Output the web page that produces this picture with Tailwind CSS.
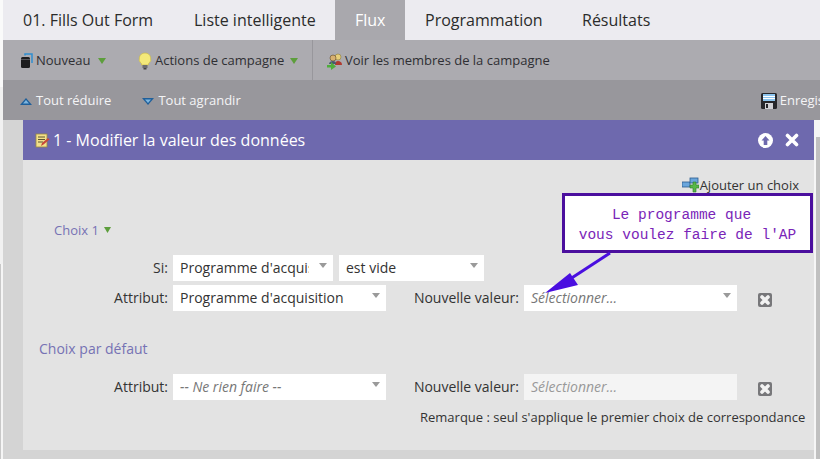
<!DOCTYPE html>
<html lang="fr">
<head>
    <meta charset="UTF-8">
    <title>Flux</title>
    <script src="https://cdn.jsdelivr.net/npm/@tailwindcss/browser@4"></script>
</head>
<body class="w-[820px] h-[459px] overflow-hidden relative flex bg-[#f5f5f5] font-['Open_Sans',sans-serif] text-[13px] text-[#333]">
    <!-- Left edge -->
    <div class="w-[3px] shrink-0 flex flex-col">
        <div class="h-[87px] bg-[#fafafa]"></div>
        <div class="h-[177px] bg-[#f1f1f1]"></div>
        <div class="flex-1 bg-[#f5f5f5] border-l border-[#c8c8c8]"></div>
    </div>

    <div class="flex-1 flex flex-col min-w-0">
        <!-- Tabs -->
        <div class="h-10 shrink-0 flex bg-[#ecebf0] text-base text-[#2b2b2b] whitespace-nowrap">
            <div class="w-[171px] pl-5 flex items-center">01. Fills Out Form</div>
            <div class="w-[161px] pl-5 flex items-center">Liste intelligente</div>
            <div class="w-[70px] pl-5 flex items-center bg-[#a9a8ad] text-white">Flux</div>
            <div class="w-[157px] pl-5 flex items-center">Programmation</div>
            <div class="pl-5 flex items-center">Résultats</div>
        </div>

        <!-- Main toolbar -->
        <div class="h-10 shrink-0 flex items-center bg-[#acabb0] text-[#2f2f33] whitespace-nowrap">
            <div class="flex items-center h-full pt-[2px] pl-[17px] w-[135px]">
                <svg class="w-[13px] h-[16px] mr-[3px]" viewBox="0 0 13 16"><path d="M5 2.500V1h7v9" fill="none" stroke="#2f8fd0" stroke-width="1.500"/><rect x="1" y="4" width="9" height="11" rx="1.500" fill="#1c1c1e"/><rect x="1" y="6" width="9" height="1" fill="#55555a"/></svg>
                <span>Nouveau</span>
                <svg class="w-2 h-[6px] ml-[7px]" viewBox="0 0 8 6"><path d="M0 0h8L4 6z" fill="#5d9e3c"/></svg>
            </div>
            <div class="flex items-center h-full pt-[2px] w-[175px] border-r border-[#98979c]">
                <svg class="w-[14px] h-[18px] mr-[3px]" viewBox="0 0 14 18"><path d="M7 1a6 6 0 0 1 3.500 10.800V13h-7v-1.200A6 6 0 0 1 7 1z" fill="#f4e97a" stroke="#c9b94a" stroke-width=".7"/><rect x="4.500" y="13" width="5" height="3" fill="#6c6c70"/><rect x="5.500" y="16" width="3" height="1.500" fill="#444"/></svg>
                <span>Actions de campagne</span>
                <svg class="w-2 h-[6px] ml-[6px]" viewBox="0 0 8 6"><path d="M0 0h8L4 6z" fill="#5d9e3c"/></svg>
            </div>
            <div class="flex items-center h-full pt-[2px] pl-[14px]">
                <svg class="w-[17px] h-[17px] mr-[1px]" viewBox="0 0 17 17"><circle cx="11" cy="4" r="3" fill="#e8cf7a" stroke="#8a7a3c" stroke-width=".6"/><path d="M8 12c0-3 1-4 3-4s4 1 4 4z" fill="#b03a30"/><circle cx="6" cy="5" r="3" fill="#d8b070" stroke="#5e4a2a" stroke-width=".6"/><path d="M2 11c0-2 2-3 4-3s3 1 3 3z" fill="#4a5a70"/><path d="M0 12h4V9l5 4.500L4 17v-2.500H0z" fill="#4fae3c"/></svg>
                <span>Voir les membres de la campagne</span>
            </div>
        </div>

        <!-- Secondary toolbar -->
        <div class="h-10 shrink-0 flex items-center pt-[2px] bg-[#98979c] text-[#f4f4f6] pl-[17px] whitespace-nowrap overflow-hidden">
            <svg class="w-3 h-[7px] mr-1 shrink-0" viewBox="0 0 12 7"><path d="M6 0l6 7H0z" fill="#1f5f9a"/><path d="M6 2l3 3.500H3z" fill="#7db6e0"/></svg>
            <span class="shrink-0">Tout réduire</span>
            <svg class="w-3 h-[7px] ml-[31px] mr-1 shrink-0" viewBox="0 0 12 7"><path d="M0 0h12L6 7z" fill="#1f5f9a"/><path d="M3 1.500h6L6 5z" fill="#7db6e0"/></svg>
            <span class="shrink-0">Tout agrandir</span>
            <div class="ml-[520px] flex items-center shrink-0">
                <svg class="w-4 h-4 mr-[3px]" viewBox="0 0 16 16"><rect width="16" height="16" rx="1.500" fill="#26262a"/><rect x="2" y="1" width="12" height="7" fill="#8cc4ee"/><rect x="2" y="3" width="12" height="1" fill="#fff"/><rect x="2" y="5" width="12" height="1" fill="#fff"/><rect x="4" y="10" width="8" height="6" fill="#d0d0d4"/><rect x="5" y="11" width="2" height="4" fill="#26262a"/></svg>
                <span>Enregistrer</span>
            </div>
        </div>

        <!-- Panel area -->
        <div class="flex-1 flex min-h-0">
            <div class="w-[811px] shrink-0 bg-[#d4d4d4] pl-5 pb-[9px] flex">
                <div class="w-[791px] flex flex-col">
                    <!-- Panel header -->
                    <div class="h-10 shrink-0 flex items-center bg-[#6e69ae] text-white text-base pl-3 pr-[15px]">
                        <svg class="w-[15px] h-[15px] mr-[4px]" viewBox="0 0 15 15"><rect x="1" y="1" width="11" height="13" fill="#f3e08a" stroke="#9a8a40" stroke-width=".8"/><path d="M3 4h7M3 6.500h7M3 9h5" stroke="#5c5430" stroke-width="1"/><path d="M6 13l1-3 6-5 1.500 1.500-6 5z" fill="#c8483a"/></svg>
                        <span class="-ml-px">1 - Modifier la valeur des données</span>
                        <svg class="w-[15px] h-[15px] ml-auto mr-3" viewBox="0 0 15 15"><circle cx="7.500" cy="7.500" r="7.500" fill="#fff"/><path d="M7.500 3l4 4.500H9.300V12H5.700V7.500H3.500z" fill="#6e69ae"/></svg>
                        <svg class="w-[14px] h-[14px]" viewBox="0 0 14 14"><path d="M2.500 2.500l9 9M11.500 2.500l-9 9" stroke="#fff" stroke-width="3.600" stroke-linecap="round"/></svg>
                    </div>

                    <!-- Panel body -->
                    <div class="flex-1 bg-[#e3e3e3] flex flex-col relative text-sm">
                        <div class="flex justify-end items-center h-4 mt-[17px] pr-[15px] text-[13px]">
                            <svg class="w-[17px] h-[16px] mr-px" viewBox="0 0 17 16"><rect x="0" y="5" width="8" height="5" fill="#6aa6dc" stroke="#2c5c90" stroke-width=".8"/><rect x="8" y="1" width="8" height="5" fill="#6aa6dc" stroke="#2c5c90" stroke-width=".8"/><path d="M8 8h3V5h3v3h3v3h-3v4h-3v-4H8z" fill="#58b848" stroke="#2e7a2a" stroke-width=".6"/></svg>
                            <span>Ajouter un choix</span>
                        </div>

                        <div class="flex items-center h-5 mt-[27px] pl-[31px] text-[#7672b4] text-[13px]">
                            <span>Choix 1</span>
                            <svg class="w-[7px] h-[6px] ml-[5px]" viewBox="0 0 7 6"><path d="M0 0h7L3.500 6z" fill="#5d9e3c"/></svg>
                        </div>

                        <!-- Si row -->
                        <div class="flex items-center h-[26px] mt-[15px]">
                            <div class="w-[145px] text-right">Si:</div>
                            <div class="ml-[5px] w-[160px] h-full bg-white flex items-center justify-between pl-[7px] pr-[6px]">
                                <span class="w-[129px] overflow-hidden whitespace-nowrap">Programme d'acquisition</span>
                                <svg class="w-2 h-[5px] mb-[6px]" viewBox="0 0 8 5"><path d="M0 0h8L4 5z" fill="#9a9a9a"/></svg>
                            </div>
                            <div class="ml-[6px] w-[145px] h-full bg-white flex items-center justify-between pl-[7px] pr-[6px]">
                                <span>est vide</span>
                                <svg class="w-2 h-[5px] mb-[6px]" viewBox="0 0 8 5"><path d="M0 0h8L4 5z" fill="#9a9a9a"/></svg>
                            </div>
                        </div>

                        <!-- Attribut row -->
                        <div class="flex items-center h-[26px] mt-1">
                            <div class="w-[145px] text-right">Attribut:</div>
                            <div class="ml-[5px] w-[213px] h-full bg-white flex items-center justify-between pl-[7px] pr-[6px]">
                                <span>Programme d'acquisition</span>
                                <svg class="w-2 h-[5px] mb-[6px]" viewBox="0 0 8 5"><path d="M0 0h8L4 5z" fill="#9a9a9a"/></svg>
                            </div>
                            <div class="w-[133px] text-right whitespace-nowrap">Nouvelle valeur:</div>
                            <div class="ml-[5px] w-[213px] h-full bg-white flex items-center justify-between pl-[7px] pr-[6px] italic text-[#777]">
                                <span>Sélectionner...</span>
                                <svg class="w-2 h-[5px] mb-[6px]" viewBox="0 0 8 5"><path d="M0 0h8L4 5z" fill="#9a9a9a"/></svg>
                            </div>
                            <svg class="w-[14px] h-[14px] ml-[21px] mt-1" viewBox="0 0 14 14"><rect width="14" height="14" rx="2" fill="#77777a"/><path d="M4 4l6 6M10 4l-6 6" stroke="#f2f2f2" stroke-width="3.600" stroke-linecap="round"/></svg>
                        </div>

                        <div class="h-5 mt-[28px] pl-4 flex items-center text-[#7672b4]">Choix par défaut</div>

                        <!-- Default row -->
                        <div class="flex items-center h-[26px] mt-[15px]">
                            <div class="w-[145px] text-right">Attribut:</div>
                            <div class="ml-[5px] w-[213px] h-full bg-white flex items-center justify-between pl-[7px] pr-[6px] italic text-[#777]">
                                <span>-- Ne rien faire --</span>
                                <svg class="w-2 h-[5px] mb-[6px]" viewBox="0 0 8 5"><path d="M0 0h8L4 5z" fill="#9a9a9a"/></svg>
                            </div>
                            <div class="w-[133px] text-right whitespace-nowrap">Nouvelle valeur:</div>
                            <div class="ml-[5px] w-[213px] h-full bg-[#f4f4f4] flex items-center pl-[7px] italic text-[#999]">Sélectionner...</div>
                            <svg class="w-[14px] h-[14px] ml-[21px] mt-1" viewBox="0 0 14 14"><rect width="14" height="14" rx="2" fill="#77777a"/><path d="M4 4l6 6M10 4l-6 6" stroke="#f2f2f2" stroke-width="3.600" stroke-linecap="round"/></svg>
                        </div>

                        <div class="mt-2 pl-[397px] text-[13px] whitespace-nowrap">Remarque : seul s'applique le premier choix de correspondance</div>
                    </div>
                </div>
            </div>

            <!-- Scrollbar edge -->
            <div class="flex-1 pt-[17px] pl-[2px] bg-[#f5f5f5]">
                <div class="h-full bg-[#c0c0c0]"></div>
            </div>
        </div>
    </div>

    <!-- Annotation callout -->
    <div class="absolute left-[562px] top-[193px] w-[251px] h-[60px] pt-1 bg-white border-[3px] border-[#4b0f9e] flex flex-col items-center justify-center font-['Liberation_Mono',monospace] text-[14.500px] leading-5 text-[#7a25b8]">
        <div class="mr-3">Le programme que</div>
        <div>vous voulez faire de l'AP</div>
    </div>
    <svg class="absolute left-[540px] top-[250px] w-[80px] h-[50px]" viewBox="0 0 80 50">
        <path d="M70 3L24 33" stroke="#4a0fe0" stroke-width="3"/>
        <path d="M5 43l25-20 8 12z" fill="#4a0fe0"/>
    </svg>
</body>
</html>
